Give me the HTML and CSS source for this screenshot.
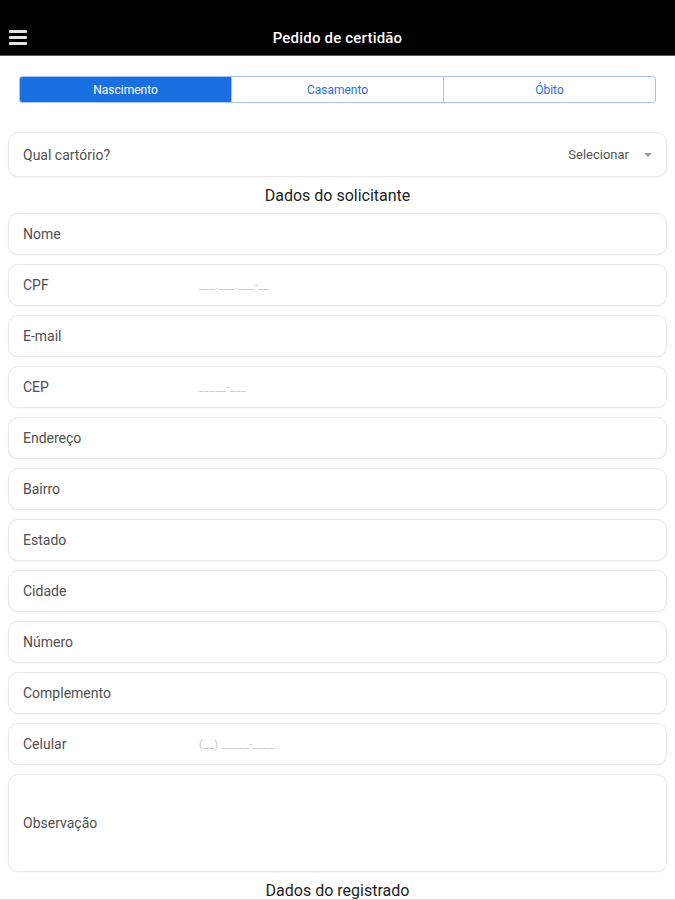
FILE: index.html
```html
<!DOCTYPE html>
<html lang="pt">
<head>
<meta charset="utf-8">
<title>Pedido de certidão</title>
<link rel="stylesheet" href="styles.css">
</head>
<body>
<header class="topbar">
  <div class="bar">
    <span class="menu"><i></i><i></i><i></i></span>
    <h1 class="title">Pedido de certidão</h1>
  </div>
</header>
<main class="content">
  <nav class="segments">
    <span class="seg active">Nascimento</span>
    <span class="seg">Casamento</span>
    <span class="seg">Óbito</span>
  </nav>
  <div class="card select">
    <span class="label">Qual cartório?</span>
    <span class="sel">Selecionar</span>
    <span class="caret"></span>
  </div>
  <h2 class="section">Dados do solicitante</h2>
  <div class="fields">
    <div class="card field"><span class="label">Nome</span></div>
    <div class="card field"><span class="label">CPF</span><span class="mask">___.___.___-__</span></div>
    <div class="card field"><span class="label">E-mail</span></div>
    <div class="card field"><span class="label">CEP</span><span class="mask">_____-___</span></div>
    <div class="card field"><span class="label">Endereço</span></div>
    <div class="card field"><span class="label">Bairro</span></div>
    <div class="card field"><span class="label">Estado</span></div>
    <div class="card field"><span class="label">Cidade</span></div>
    <div class="card field"><span class="label">Número</span></div>
    <div class="card field"><span class="label">Complemento</span></div>
    <div class="card field"><span class="label">Celular</span><span class="mask">(__) _____-____</span></div>
    <div class="card field tall"><span class="label">Observação</span></div>
  </div>
  <h2 class="section last">Dados do registrado</h2>
  <div class="bottom-line"></div>
</main>
</body>
</html>
```
FILE: styles.css
```css
* { box-sizing: border-box; }
html, body { margin: 0; padding: 0; }
body {
  font-family: Roboto, "Liberation Sans", Arial, sans-serif;
  background: #fff;
  color: #333;
  height: 900px;
  overflow: hidden;
}
.topbar {
  background: #000;
  height: 56px;
  padding-top: 20px;
  border-bottom: 1px solid #555;
}
.bar {
  height: 36px;
  display: flex;
  align-items: center;
  justify-content: center;
  position: relative;
}
.menu {
  position: absolute;
  left: 9px;
  top: 10px;
  width: 18px;
  display: flex;
  flex-direction: column;
  gap: 3px;
}
.menu i {
  display: block;
  height: 3px;
  background: #e4e4e4;
  border-radius: 1px;
}
.title {
  margin: 0;
  color: #fff;
  font-size: 15px;
  font-weight: 500;
  letter-spacing: 0.2px;
}
.content {
  padding: 20px 8px 0;
}
.segments {
  display: flex;
  margin: 0 11px;
  height: 27px;
  border: 1px solid #a8c3f0;
  border-radius: 3px;
  overflow: hidden;
}
.seg {
  flex: 1;
  display: flex;
  align-items: center;
  justify-content: center;
  font-size: 12px;
  color: #2a6fd8;
  border-left: 1px solid #a8c3f0;
}
.seg:first-child { border-left: none; }
.seg.active {
  background: #1a6fe0;
  color: #fff;
}
.card {
  border: 1px solid #e8e8e8;
  border-radius: 10px;
  box-shadow: 0 1px 2px rgba(0,0,0,0.04);
  display: flex;
  align-items: center;
  padding: 0 14px;
  background: #fff;
}
.select {
  margin-top: 29px;
  height: 45px;
}
.label {
  font-size: 14px;
  color: #505050;
}
.select .sel {
  margin-left: auto;
  font-size: 13px;
  color: #555;
  margin-right: 15px;
}
.caret {
  width: 0;
  height: 0;
  border-left: 4px solid transparent;
  border-right: 4px solid transparent;
  border-top: 4px solid #999;
}
.section {
  margin: 0;
  height: 36px;
  display: flex;
  align-items: center;
  justify-content: center;
  font-size: 16px;
  font-weight: 400;
  color: #222;
}
.fields {
  display: flex;
  flex-direction: column;
  gap: 9px;
}
.field { height: 42px; position: relative; }
.field.tall { height: 98px; }
.mask {
  position: absolute;
  left: 190px;
  font-size: 11px;
  color: #c8c8c8;
  letter-spacing: 0.5px;
}
.bottom-line {
  height: 4px;
  border-top: 2px solid #ddd;
  margin: -9px -8px 0;
}
```
